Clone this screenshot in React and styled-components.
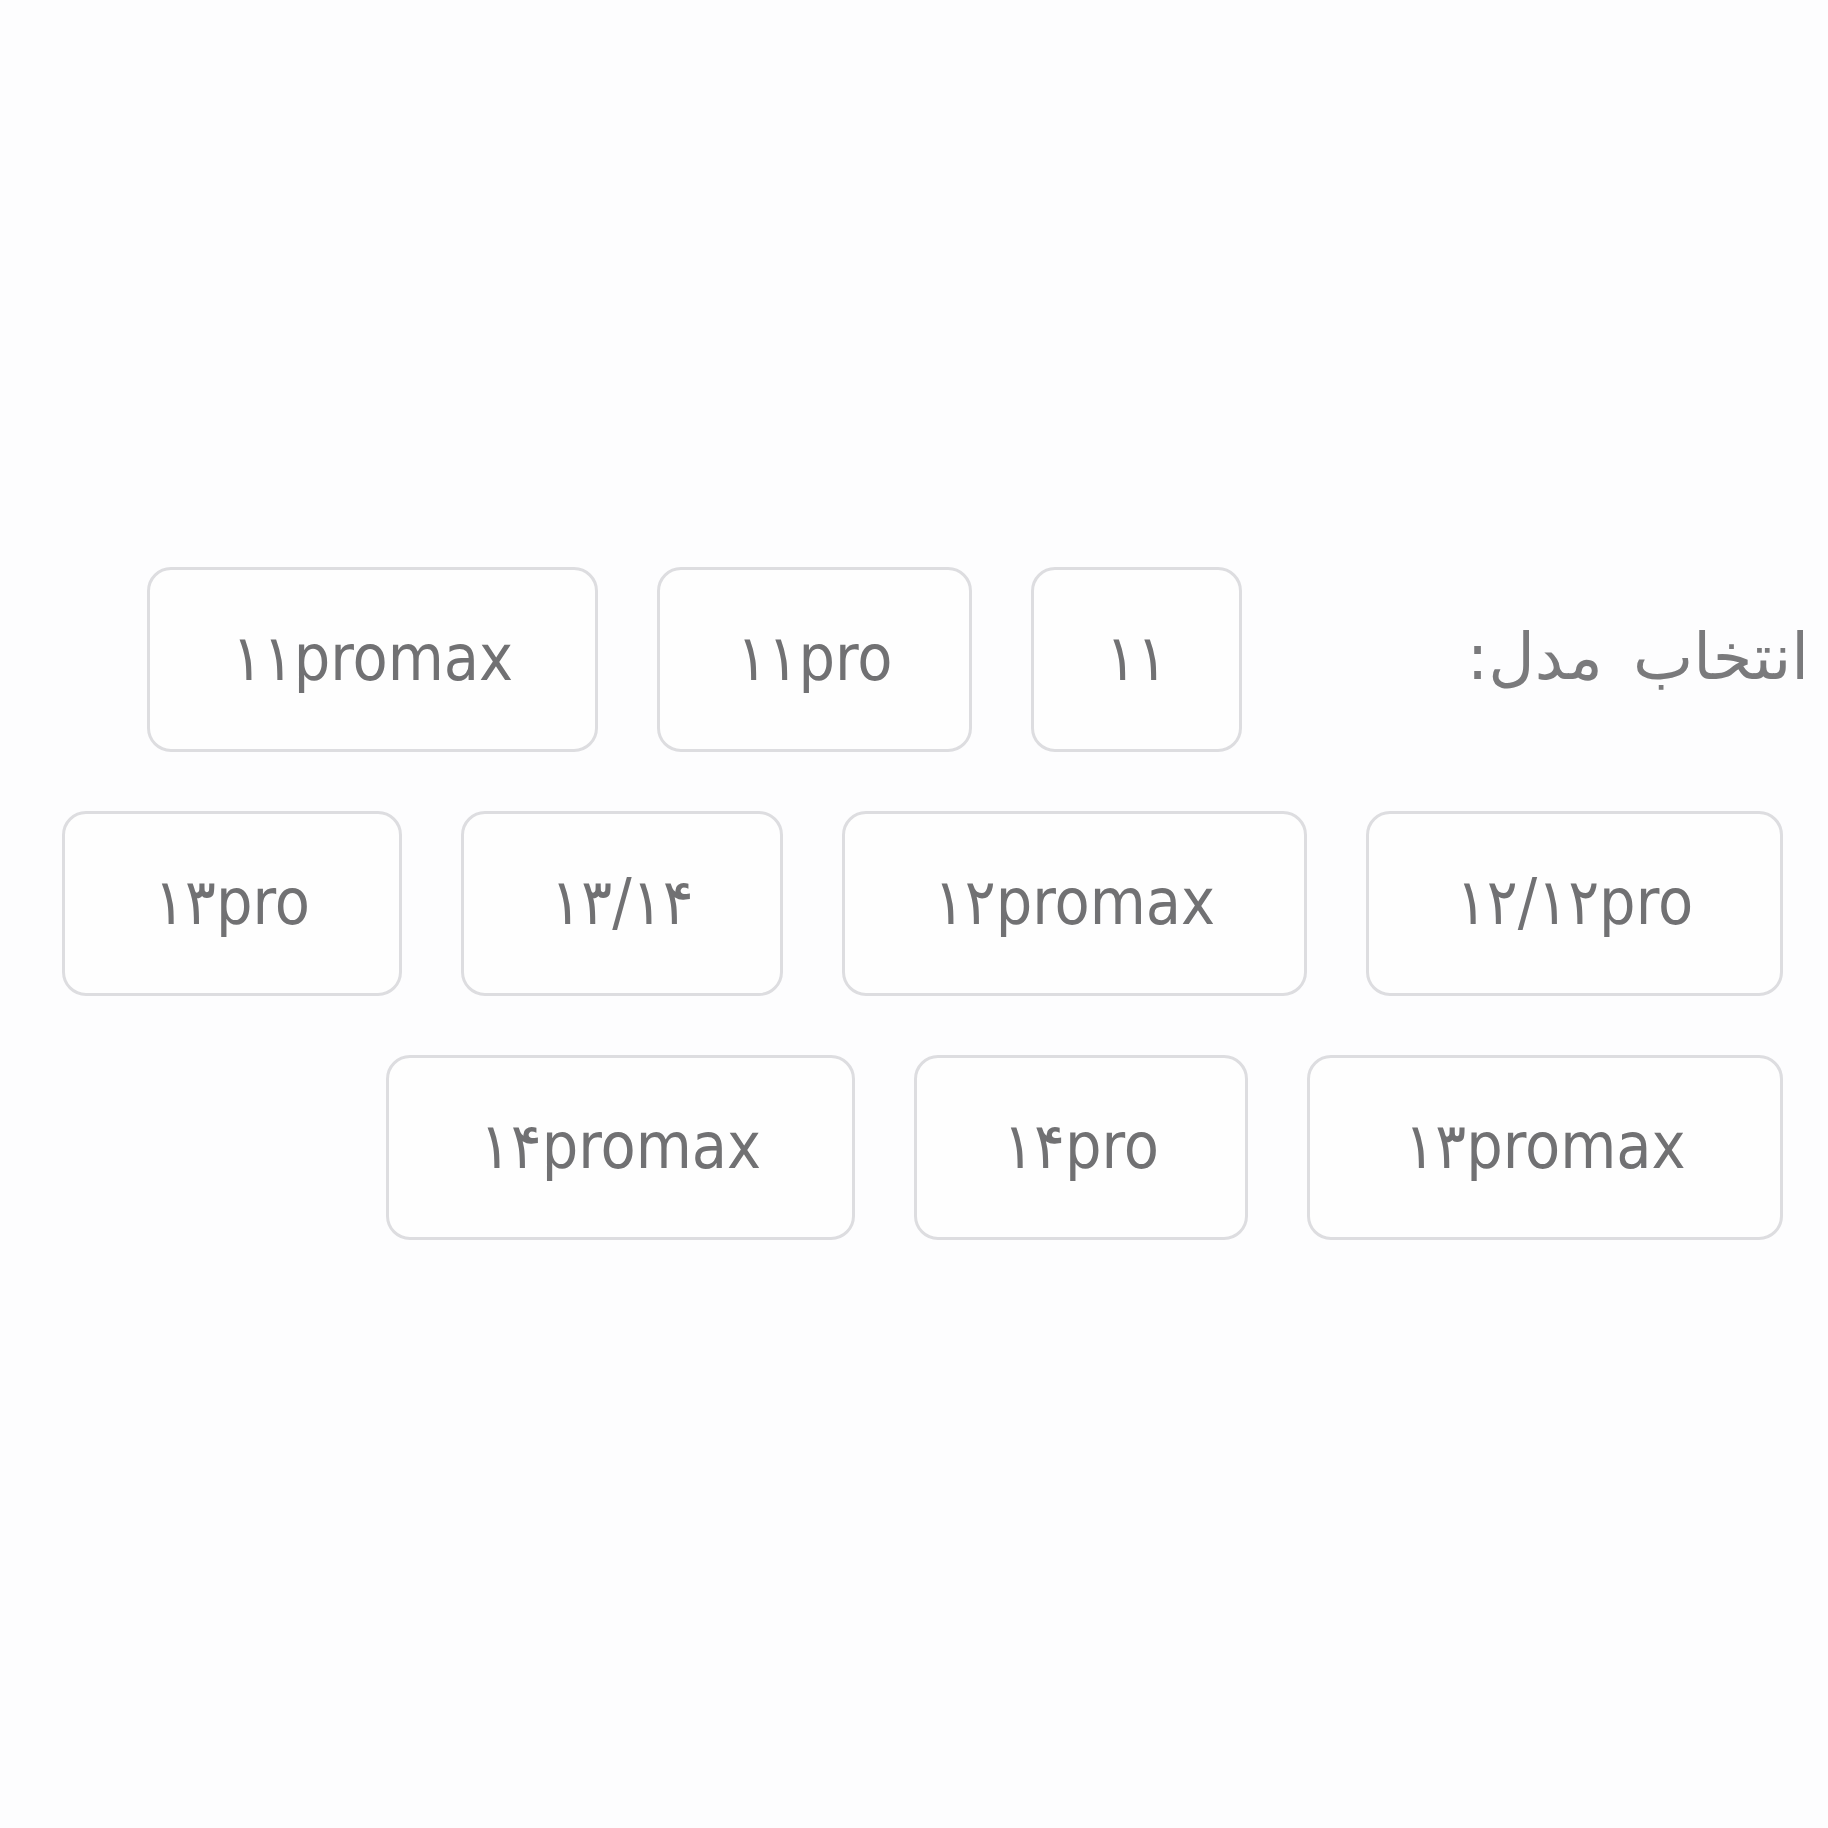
import React from "react"
import styled, { createGlobalStyle } from "styled-components"

const Global = createGlobalStyle`
  html, body {
    margin: 0;
    padding: 0;
    background: #fdfdfe;
  }
`

const Picker = styled.div`
  direction: rtl;
  display: flex;
  flex-wrap: wrap;
  gap: 59px;
  padding: 567px 45px 0 40px;
  font-family: "DejaVu Sans Condensed", "DejaVu Sans", sans-serif;
`

const Label = styled.div`
  width: 508px;
  height: 185px;
  margin-right: -26px;
  padding-bottom: 6px;
  box-sizing: border-box;
  display: flex;
  align-items: center;
  font-family: "DejaVu Sans", sans-serif;
  font-size: 64px;
  word-spacing: 10px;
  color: #7a7a7c;
  white-space: nowrap;
`

const ModelButton = styled.button`
  direction: ltr;
  box-sizing: border-box;
  width: ${(p) => p.$w}px;
  height: 185px;
  display: flex;
  align-items: center;
  justify-content: center;
  padding: 0 0 4px;
  background: #fefefe;
  border: 3px solid #dddde0;
  border-radius: 24px;
  font-family: inherit;
  font-size: 64px;
  color: #717173;
  cursor: pointer;
`

const models = [
  { name: "۱۱", w: 211 },
  { name: "۱۱pro", w: 315 },
  { name: "۱۱promax", w: 451 },
  { name: "۱۲/۱۲pro", w: 417 },
  { name: "۱۲promax", w: 465 },
  { name: "۱۳/۱۴", w: 322 },
  { name: "۱۳pro", w: 340 },
  { name: "۱۳promax", w: 476 },
  { name: "۱۴pro", w: 334 },
  { name: "۱۴promax", w: 469 },
]

export default function App() {
  return (
    <>
      <Global />
      <Picker>
        <Label>انتخاب مدل:</Label>
        {models.map((m) => (
          <ModelButton key={m.name} $w={m.w}>
            {m.name}
          </ModelButton>
        ))}
      </Picker>
    </>
  )
}
